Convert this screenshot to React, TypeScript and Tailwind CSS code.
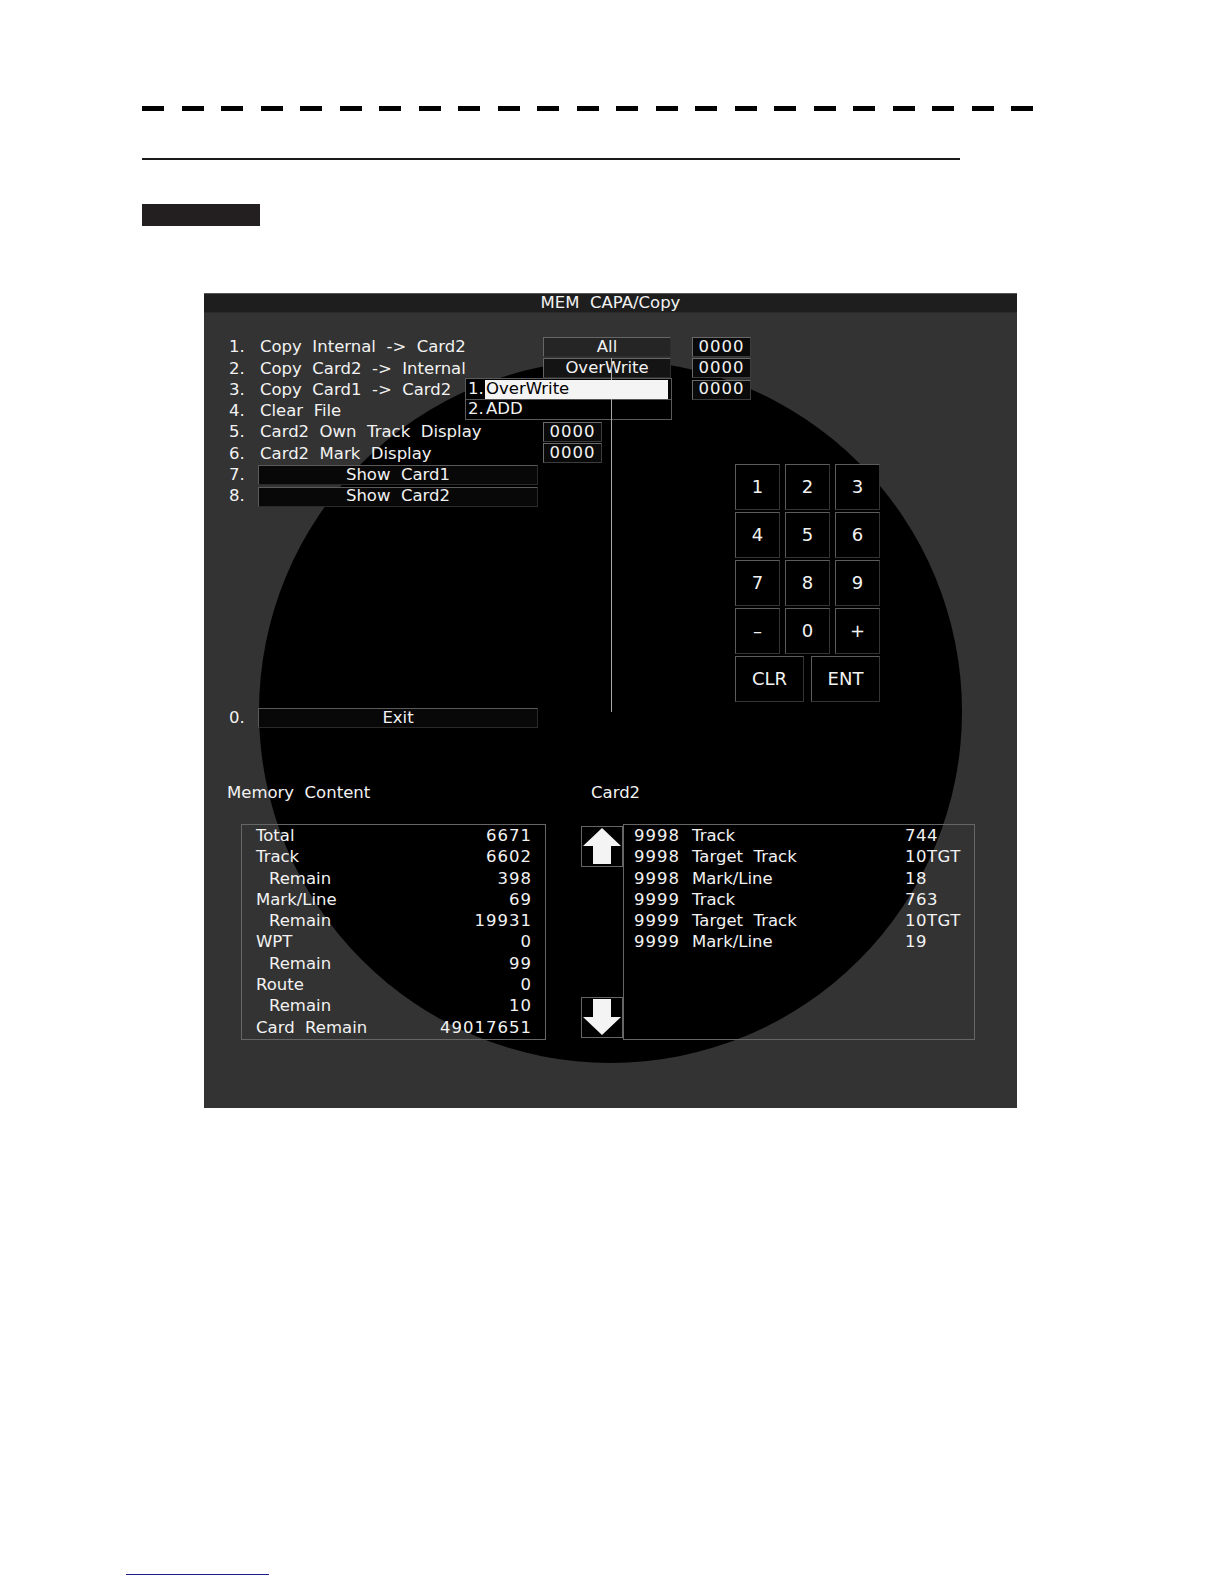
const memoryRows: { label: string; value: string; indent?: boolean }[] = [
  { label: "Total", value: "6671" },
  { label: "Track", value: "6602" },
  { label: "Remain", value: "398", indent: true },
  { label: "Mark/Line", value: "69" },
  { label: "Remain", value: "19931", indent: true },
  { label: "WPT", value: "0" },
  { label: "Remain", value: "99", indent: true },
  { label: "Route", value: "0" },
  { label: "Remain", value: "10", indent: true },
  { label: "Card  Remain", value: "49017651" },
];

const cardRows = [
  { id: "9998", name: "Track", value: "744" },
  { id: "9998", name: "Target  Track", value: "10TGT" },
  { id: "9998", name: "Mark/Line", value: "18" },
  { id: "9999", name: "Track", value: "763" },
  { id: "9999", name: "Target  Track", value: "10TGT" },
  { id: "9999", name: "Mark/Line", value: "19" },
];

const menuRows = [
  "Copy  Internal  ->  Card2",
  "Copy  Card2  ->  Internal",
  "Copy  Card1  ->  Card2",
  "Clear  File",
  "Card2  Own  Track  Display",
  "Card2  Mark  Display",
];

function ValueBox({ value }: { value: string }) {
  return (
    <div className="flex h-[20px] w-full items-center justify-center border border-[#3c3c3c] border-t-[#6a6a6a] border-l-[#6a6a6a] bg-[#0a0a0a] tracking-[1px] leading-none">
      {value}
    </div>
  );
}

function WideButton({ label }: { label: string }) {
  return (
    <div className="flex h-[20px] w-[280px] items-center justify-center border border-[#2a2a2a] border-t-[#5a5a5a] border-l-[#5a5a5a] bg-[#080808] whitespace-pre leading-none">
      {label}
    </div>
  );
}

function KeyCell({ label, wide }: { label: string; wide?: boolean }) {
  return (
    <div
      className={
        (wide ? "w-[69px] " : "w-[45px] ") +
        "flex h-[46px] items-center justify-center border border-[#333] border-t-[#5c5c5c] border-l-[#5c5c5c] bg-black text-[18px]"
      }
    >
      {label}
    </div>
  );
}

function Arrow({ down }: { down?: boolean }) {
  return (
    <div className="flex h-[41px] w-[42px] items-center justify-center border border-[#666] bg-black">
      <svg width="40" height="38" viewBox="0 0 40 38" className={down ? "rotate-180" : ""}>
        <path d="M20 1 L39 19 L29 19 L29 37 L11 37 L11 19 L1 19 Z" fill="#f4f4f4" />
      </svg>
    </div>
  );
}

export default function App() {
  const keys = ["1", "2", "3", "4", "5", "6", "7", "8", "9", "–", "0", "+"];

  return (
    <div className="flex h-[1584px] w-[1224px] flex-col bg-white font-['DejaVu_Sans',sans-serif]">
      <div className="ml-[142px] mt-[106px] flex gap-[17.5px]">
        {Array.from({ length: 23 }).map((_, i) => (
          <div key={i} className="h-[5px] w-[22px] bg-black" />
        ))}
      </div>
      <div className="ml-[142px] mt-[47px] h-[2px] w-[818px] bg-[#1a1a1a]" />
      <div className="ml-[142px] mt-[44px] h-[22px] w-[118px] bg-[#231f20]" />

      {/* MEM CAPA/Copy screen */}
      <div className="relative ml-[204px] mt-[67px] h-[815px] w-[813px] overflow-hidden bg-[#333] text-[16.5px] text-[#f2f2f2]">
        <div className="absolute left-[55px] top-[67px] h-[703px] w-[703px] rounded-full bg-black" />

        <div className="relative flex h-[20px] items-center justify-center border-t border-b border-t-[#555] border-b-[#2a2a2a] bg-[#1e1e1e] whitespace-pre leading-none">
          MEM  CAPA/Copy
        </div>

        <div className="relative flex pl-[25px] pt-[24px]">
          {/* menu column */}
          <div className="flex w-[314px] flex-col">
            {menuRows.map((text, i) => (
              <div key={i} className="flex h-[21.3px] items-center whitespace-pre">
                <span className="w-[31px]">{i + 1}.</span>
                <span>{text}</span>
              </div>
            ))}
            {["Show  Card1", "Show  Card2"].map((text, i) => (
              <div key={text} className="flex h-[21.3px] items-center">
                <span className="w-[29px]">{i + 7}.</span>
                <WideButton label={text} />
              </div>
            ))}
            <div className="mt-[200px] flex h-[21.3px] items-center">
              <span className="w-[29px]">0.</span>
              <WideButton label="Exit" />
            </div>
          </div>

          {/* mode column */}
          <div className="flex w-[128px] flex-col">
            <div className="h-[21.3px]">
              <div className="flex h-[20px] items-center justify-center border border-[#2e2e2e] border-t-[#666] border-l-[#666] bg-[#252525] leading-none">
                All
              </div>
            </div>
            <div className="h-[21.3px]">
              <div className="flex h-[20px] items-center justify-center border border-[#2e2e2e] border-t-[#666] border-l-[#666] bg-[#141414] leading-none">
                OverWrite
              </div>
            </div>
            <div className="h-[42.6px]" />
            <div className="flex h-[21.3px] w-[59px]">
              <ValueBox value="0000" />
            </div>
            <div className="flex h-[21.3px] w-[59px]">
              <ValueBox value="0000" />
            </div>
          </div>

          {/* value column + keypad */}
          <div className="ml-[21px] flex flex-col">
            {["0000", "0000", "0000"].map((v, i) => (
              <div key={i} className="flex h-[21.3px] w-[59px]">
                <ValueBox value={v} />
              </div>
            ))}
            <div className="ml-[43px] mt-[63px] flex w-[145px] flex-col gap-[2px]">
              <div className="grid grid-cols-3 gap-x-[5px] gap-y-[2px]">
                {keys.map((k) => (
                  <KeyCell key={k} label={k} />
                ))}
              </div>
              <div className="flex gap-[7px]">
                <KeyCell label="CLR" wide />
                <KeyCell label="ENT" wide />
              </div>
            </div>
          </div>
        </div>

        {/* popup list for item 3 */}
        <div className="absolute left-[261px] top-[85px] flex h-[42px] w-[207px] flex-col border border-[#5a5a5a] bg-black leading-none">
          <div className="flex h-[20px] items-center">
            <span className="w-[19px] pl-[2px]">1.</span>
            <span className="relative z-30 mr-[3px] flex h-[19px] flex-1 items-center bg-[#f4f4f4] pl-[1px] text-black">
              OverWrite
            </span>
          </div>
          <div className="flex h-[20px] items-center border-t border-[#555]">
            <span className="w-[19px] pl-[2px]">2.</span>
            <span className="pl-[1px]">ADD</span>
          </div>
        </div>
        <div className="absolute left-[407px] top-[65px] z-20 h-[354px] w-px bg-[#a8a8a8]" />

        {/* memory content */}
        <div className="relative mt-[54px] flex h-[21px] items-center pl-[23px]">
          <div className="w-[364px] whitespace-pre">Memory  Content</div>
          <div>Card2</div>
        </div>
        <div className="relative mt-[20px] flex">
          <div className="ml-[37px] flex h-[216px] w-[305px] flex-col border border-[#666] pl-[14px] pr-[13px] pt-[1px]">
            {memoryRows.map((r, i) => (
              <div key={i} className="flex h-[21.3px] items-center justify-between whitespace-pre">
                <span className={r.indent ? "pl-[13px]" : ""}>{r.label}</span>
                <span className="tracking-[1px]">{r.value}</span>
              </div>
            ))}
          </div>
          <div className="ml-[35px] flex h-[216px] w-[42px] flex-col justify-between pt-[2px] pb-[2px]">
            <Arrow />
            <Arrow down />
          </div>
          <div className="flex h-[216px] w-[352px] flex-col border border-[#666] pl-[10px] pt-[1px]">
            {cardRows.map((r, i) => (
              <div key={i} className="flex h-[21.3px] items-center whitespace-pre">
                <span className="w-[58px] tracking-[1px]">{r.id}</span>
                <span className="w-[213px]">{r.name}</span>
                <span className="tracking-[0.5px]">{r.value}</span>
              </div>
            ))}
          </div>
        </div>
      </div>

      <div className="ml-[126px] mt-[466px] h-px w-[143px] bg-[#1c1c8c]" />
    </div>
  );
}
